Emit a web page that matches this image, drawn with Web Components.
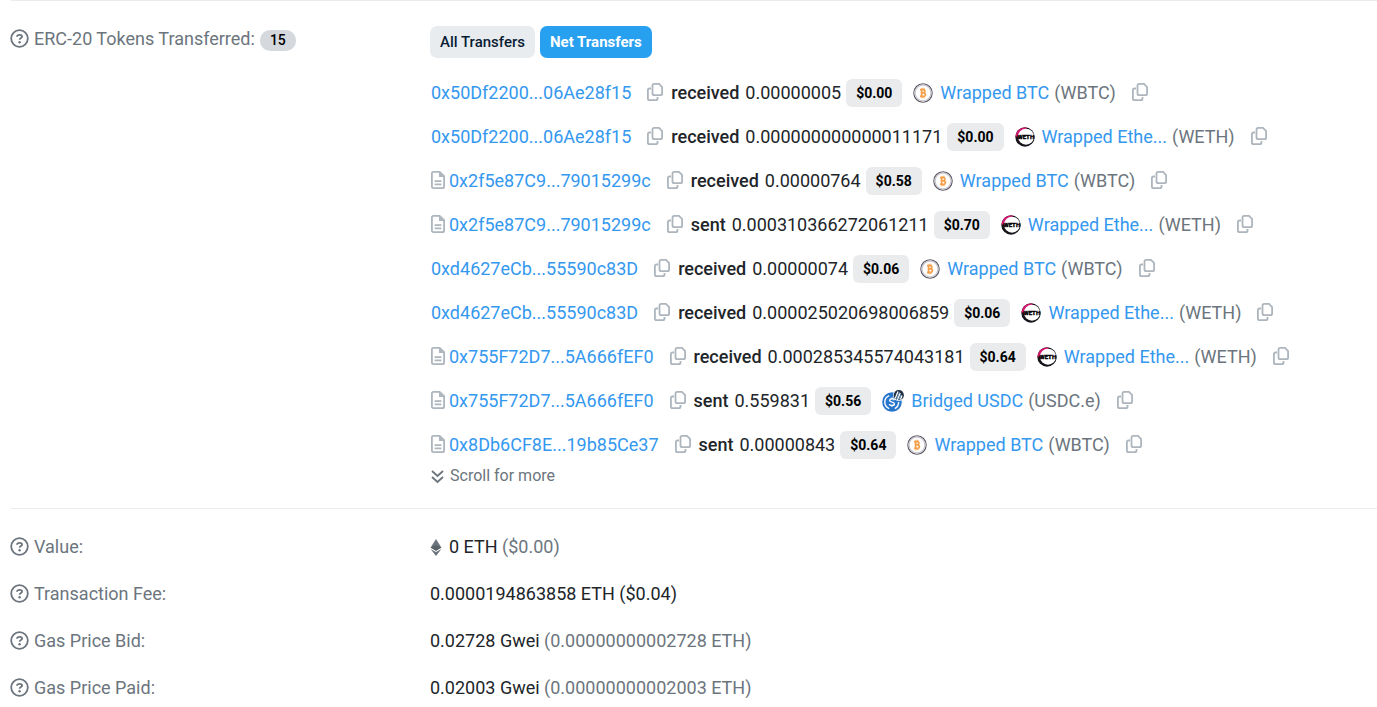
<!DOCTYPE html>
<html lang="en">
<head>
<meta charset="utf-8">
<title>Transaction Details</title>
<style>
  html, body { margin: 0; background: #fff; }
  body { font: 18px/28px Roboto, sans-serif; color: #212529; }
</style>
</head>
<body>
<tx-details></tx-details>

<template id="tx-icon">
  <style>
    :host { display: inline-flex; flex: none; }
    svg { display: block; overflow: visible; }
  </style>
</template>

<template id="copy-button">
  <style>
    :host { display: inline-flex; flex: none; }
    button { display: flex; padding: 0; border: 0; background: none; color: #adb5bd; cursor: pointer; }
  </style>
  <button type="button" aria-label="Copy address"><tx-icon name="copy"></tx-icon></button>
</template>

<template id="detail-row">
  <style>
    :host { display: grid; grid-template-columns: 420px 1fr; align-items: start; }
    .label { display: flex; align-items: center; gap: 5px; color: #6c757d; }
    .label tx-icon { margin-bottom: 2px; }
    .value { min-width: 0; }
  </style>
  <div class="label"><tx-icon name="help"></tx-icon><slot name="label"></slot></div>
  <div class="value"><slot></slot></div>
</template>

<template id="transfer-row">
  <style>
    :host { display: flex; align-items: center; height: 28px; padding-left: 1px; white-space: nowrap; }
    a { color: #3498ef; text-decoration: none; }
    .file { color: #adb5bd; margin: 0 3px 2px 0; }
    .copy { margin: 0 0 2px 16px; }
    .verb { margin-left: 8px; font-weight: 500; }
    .amount { margin-left: 6px; }
    .price { margin-left: 5px; padding: 0 10px; border-radius: 6px; background: #e9ebed; color: #000; font-size: 14px; font-weight: 700; line-height: 28px; }
    .logo { margin: 0 7px 0 11px; }
    .symbol { margin-left: 5px; color: #6c757d; }
  </style>
  <tx-icon class="file" name="file"></tx-icon>
  <a class="address" href="#"></a>
  <copy-button class="copy"></copy-button>
  <span class="verb"></span>
  <span class="amount"></span>
  <span class="price"></span>
  <tx-icon class="logo"></tx-icon>
  <a class="token" href="#"></a>
  <span class="symbol"></span>
  <copy-button class="copy"></copy-button>
</template>

<template id="tx-details">
  <style>
    :host { display: block; padding-left: 10px; }
    section { border-top: 1px solid #e9ecef; margin-left: 1px; padding-right: 10px; }
    detail-row { margin-left: -1px; }
    .tokens { padding: 24px 10px 20px 0; }
    .facts { display: grid; gap: 19px; padding-top: 24px; }
    .count { padding: 0 10px; border-radius: 10px; background: #d5d9de; color: #000; font-size: 14px; font-weight: 500; line-height: 21px; margin-top: 3px; }
    .tabs { display: flex; gap: 5px; padding-top: 1px; }
    button { border: 0; border-radius: 7px; padding: 0 10px; height: 32px; font: 500 15px/32px Roboto, sans-serif; background: #e9ecef; color: #081d35; cursor: pointer; }
    button[aria-pressed="true"] { background: #28a0f0; color: #fff; font-weight: 700; }
    .list { display: grid; gap: 16px; margin-top: 21px; }
    .more { display: flex; align-items: center; gap: 6px; margin-top: 5px; padding-left: 1px; color: #6c757d; font-size: 16px; line-height: 24px; }
    .muted { color: #6c757d; }
    .eth { display: flex; align-items: center; gap: 7px; }
  </style>
  <section class="tokens">
    <detail-row>
      <span slot="label">ERC-20 Tokens Transferred:</span>
      <span slot="label" class="count">15</span>
      <div class="tabs">
        <button type="button" aria-pressed="false">All Transfers</button>
        <button type="button" aria-pressed="true">Net Transfers</button>
      </div>
      <div class="list">
        <transfer-row address="0x50Df2200...06Ae28f15" verb="received" amount="0.00000005" price="$0.00" token="wbtc"></transfer-row>
        <transfer-row address="0x50Df2200...06Ae28f15" verb="received" amount="0.000000000000011171" price="$0.00" token="weth"></transfer-row>
        <transfer-row contract address="0x2f5e87C9...79015299c" verb="received" amount="0.00000764" price="$0.58" token="wbtc"></transfer-row>
        <transfer-row contract address="0x2f5e87C9...79015299c" verb="sent" amount="0.000310366272061211" price="$0.70" token="weth"></transfer-row>
        <transfer-row address="0xd4627eCb...55590c83D" verb="received" amount="0.00000074" price="$0.06" token="wbtc"></transfer-row>
        <transfer-row address="0xd4627eCb...55590c83D" verb="received" amount="0.000025020698006859" price="$0.06" token="weth"></transfer-row>
        <transfer-row contract address="0x755F72D7...5A666fEF0" verb="received" amount="0.000285345574043181" price="$0.64" token="weth"></transfer-row>
        <transfer-row contract address="0x755F72D7...5A666fEF0" verb="sent" amount="0.559831" price="$0.56" token="usdc"></transfer-row>
        <transfer-row contract address="0x8Db6CF8E...19b85Ce37" verb="sent" amount="0.00000843" price="$0.64" token="wbtc"></transfer-row>
      </div>
      <div class="more"><tx-icon name="chevrons"></tx-icon><span>Scroll for more</span></div>
    </detail-row>
  </section>
  <section class="facts">
    <detail-row><span slot="label">Value:</span><div class="eth"><tx-icon name="eth"></tx-icon><span>0 ETH <span class="muted">($0.00)</span></span></div></detail-row>
    <detail-row><span slot="label">Transaction Fee:</span>0.0000194863858 ETH ($0.04)</detail-row>
    <detail-row><span slot="label">Gas Price Bid:</span>0.02728 Gwei <span class="muted">(0.00000000002728 ETH)</span></detail-row>
    <detail-row><span slot="label">Gas Price Paid:</span>0.02003 Gwei <span class="muted">(0.00000000002003 ETH)</span></detail-row>
  </section>
</template>

<script>
  const ICONS = {
    help: [19, 19, '<g fill="none" stroke="currentColor" stroke-width="1.8"><circle cx="9.5" cy="9.5" r="8.3"/><path d="M7 7.8C7.1 6.2 8 5.8 9.6 5.8S12.1 6.5 12.1 7.6C12.1 9.1 9.6 9 9.6 10.8"/></g><circle cx="9.6" cy="13.2" r="1.2" fill="currentColor"/>'],
    copy: [16, 18, '<g fill="none" stroke="currentColor" stroke-width="1.8"><path d="M7.2.9H12L15.1 4V10.5Q15.1 12.2 13.4 12.2H7.2Q5.5 12.2 5.5 10.5V2.6Q5.5.9 7.2.9Z"/><path d="M4 5.5H2.6Q.9 5.5.9 7.2V15.4Q.9 17.1 2.6 17.1H8.8Q10.5 17.1 10.5 15.4V14"/></g>'],
    file: [15, 18, '<g fill="none" stroke="currentColor" stroke-width="1.8"><path d="M2.6.9H8.6L13.1 5.2V15.4Q13.1 17.1 11.4 17.1H2.6Q.9 17.1.9 15.4V2.6Q.9.9 2.6.9Z"/><path d="M3.6 10.2H10.4M3.6 13.4H10.4"/></g><path d="M8 .9V6H13.4Z" fill="currentColor"/>'],
    chevrons: [13, 13, '<path d="M1 1 6.5 6 12 1M1 7 6.5 12 12 7" fill="none" stroke="currentColor" stroke-width="1.8"/>'],
    eth: [12, 17, '<path d="M6 0 11.4 8.6 6 11.8.6 8.6Z" fill="#6c757d"/><path d="M.6 9.9 6 13 11.4 9.9 6 17Z" fill="#6c757d"/><path d="M.6 8.6 6 6.3 11.4 8.6 6 11.8Z" fill="#596169"/>'],
    wbtc: [20, 20, '<circle cx="10" cy="10" r="9.2" fill="#fff" stroke="#5a5564" stroke-width="1.1"/><circle cx="10" cy="10" r="7.9" fill="none" stroke="#c9c8cd" stroke-width="1.2"/><g fill="none" stroke="#f5a04a" stroke-width="1.8"><path d="M8.6 6.4V13.4M7 6.6H10.3Q11.9 6.6 11.9 8.1T10.3 9.8H8.6M10.3 9.9Q12.4 9.9 12.4 11.6T10.4 13.3H7"/><path d="M9 4.8V6M10.9 4.8V6M9 13.8V15.2M10.9 13.8V15.2" stroke-width="1.1"/></g>'],
    weth: [20, 20, '<circle cx="10" cy="10" r="9.7" fill="#17131a"/><path d="M.5 10A9.6 9.6 0 0 1 12 .6L10.5 3 3 9Z" fill="#d5166f"/><circle cx="11" cy="9.7" r="8" fill="#fff"/><text x="10.8" y="12.2" text-anchor="middle" font-family="Roboto, sans-serif" font-size="6" font-weight="900" fill="#000" stroke="#000" stroke-width=".3">WETH</text>'],
    usdc: [22, 22, '<circle cx="10" cy="12" r="9.8" fill="#2875cc"/><g fill="none" stroke="#fff" stroke-width="1.4"><path d="M7.2 5.6A7 7 0 0 0 7.2 18.6M12.8 18.6A7 7 0 0 0 16.6 12"/><path d="M12.4 10.2Q12 8.8 10 8.8T7.6 10.3Q7.6 11.6 10 12.1T12.4 14Q12.4 15.5 10 15.5T7.5 14M10 7.5V8.8M10 15.5V16.8"/></g><circle cx="16.8" cy="5.2" r="5.8" fill="#fff"/><circle cx="16.8" cy="5.2" r="5.1" fill="#213147"/><path d="M13.2 8.5 16 1.6M15.4 10 18.2 3M18.4 9.6 20 5.6" stroke="#fff" stroke-width="1.3"/><path d="M14.5 9.5 17.3 2.5M17.2 9.8 19 5" stroke="#7fb7e6" stroke-width=".8"/>']
  };
  const TOKENS = {
    wbtc: ['Wrapped BTC', '(WBTC)'],
    weth: ['Wrapped Ethe...', '(WETH)'],
    usdc: ['Bridged USDC', '(USDC.e)']
  };

  class Templated extends HTMLElement {
    constructor() {
      super();
      this.attachShadow({ mode: 'open' });
      this.shadowRoot.append(document.getElementById(this.localName).content.cloneNode(true));
    }
  }

  class TxIcon extends Templated {
    static observedAttributes = ['name'];
    attributeChangedCallback(attr, old, name) {
      const [w, h, art] = ICONS[name];
      this.shadowRoot.querySelector('svg')?.remove();
      this.shadowRoot.querySelector('style').insertAdjacentHTML('afterend',
        `<svg width="${w}" height="${h}" viewBox="0 0 ${w} ${h}" aria-hidden="true">${art}</svg>`);
    }
  }

  class TransferRow extends Templated {
    connectedCallback() {
      const find = (selector) => this.shadowRoot.querySelector(selector);
      const token = this.getAttribute('token');
      for (const part of ['address', 'verb', 'amount', 'price']) {
        find('.' + part).textContent = this.getAttribute(part);
      }
      [find('.token').textContent, find('.symbol').textContent] = TOKENS[token];
      find('.logo').setAttribute('name', token);
      if (!this.hasAttribute('contract')) find('.file')?.remove();
    }
  }

  customElements.define('tx-icon', TxIcon);
  customElements.define('copy-button', class extends Templated {});
  customElements.define('detail-row', class extends Templated {});
  customElements.define('transfer-row', TransferRow);
  customElements.define('tx-details', class extends Templated {});
</script>
</body>
</html>
